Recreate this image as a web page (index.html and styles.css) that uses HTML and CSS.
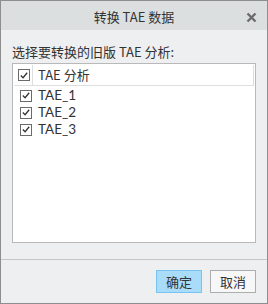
FILE: index.html
```html
<!DOCTYPE html>
<html lang="zh">
<head>
<meta charset="utf-8">
<link rel="stylesheet" href="styles.css">
</head>
<body>
<div class="dialog">
  <div class="titlebar">
    <span class="title">转换 TAE 数据</span>
    <span class="close">
      <svg width="11" height="11" viewBox="0 0 11 11"><path d="M1.5 1.5 L9.5 9.5 M9.5 1.5 L1.5 9.5" stroke="#6b6b6b" stroke-width="2.4" fill="none"/></svg>
    </span>
  </div>
  <div class="content">
    <div class="label">选择要转换的旧版 TAE 分析:</div>
    <div class="list">
      <div class="header">
        <span class="hcheck"><span class="cb"><svg width="11" height="11" viewBox="0 0 11 11"><path d="M2 5.5 L4.5 8 L9 2.5" stroke="#333" stroke-width="1.4" fill="none"/></svg></span></span>
        <span class="htext">TAE 分析</span>
      </div>
      <div class="row"><span class="cb"><svg width="11" height="11" viewBox="0 0 11 11"><path d="M2 5.5 L4.5 8 L9 2.5" stroke="#333" stroke-width="1.4" fill="none"/></svg></span><span class="rtext">TAE_1</span></div>
      <div class="row"><span class="cb"><svg width="11" height="11" viewBox="0 0 11 11"><path d="M2 5.5 L4.5 8 L9 2.5" stroke="#333" stroke-width="1.4" fill="none"/></svg></span><span class="rtext">TAE_2</span></div>
      <div class="row"><span class="cb"><svg width="11" height="11" viewBox="0 0 11 11"><path d="M2 5.5 L4.5 8 L9 2.5" stroke="#333" stroke-width="1.4" fill="none"/></svg></span><span class="rtext">TAE_3</span></div>
    </div>
  </div>
  <div class="sep"></div>
  <div class="footer">
    <button class="btn primary">确定</button>
    <button class="btn">取消</button>
  </div>
</div>
</body>
</html>
```
FILE: styles.css
```css
html, body {
  margin: 0;
  padding: 0;
}
body {
  width: 268px;
  height: 304px;
  font-family: "Noto Sans CJK SC", "Noto Sans", sans-serif;
  font-size: 13px;
  color: #333;
}
.dialog {
  box-sizing: border-box;
  width: 268px;
  height: 304px;
  border: 1px solid #8e8e8e;
  background: #eeeff0;
  display: flex;
  flex-direction: column;
}
.titlebar {
  height: 29px;
  background: #dcdfe0;
  position: relative;
  display: flex;
  align-items: center;
  justify-content: center;
}
.title {
  font-size: 13px;
  color: #333;
  line-height: 17px;
  margin-top: 1px;
}
.close {
  position: absolute;
  right: 10px;
  top: 11px;
  width: 11px;
  height: 11px;
  display: flex;
}
.content {
  padding: 13px 11px 0 11px;
}
.label {
  line-height: 17px;
  height: 17px;
  color: #333;
}
.list {
  margin-top: 3px;
  height: 176px;
  background: #fff;
  border: 1px solid #b9b9b9;
  padding: 1px;
  box-sizing: content-box;
}
.header {
  display: flex;
  align-items: center;
  height: 20px;
  border-right: 1px solid #dedede;
  border-bottom: 1px solid #dedede;
}
.hcheck {
  width: 14px;
  padding-left: 4px;
  height: 20px;
  display: flex;
  align-items: center;
  border-right: 1px solid #dedede;
}
.htext {
  padding-left: 5px;
  line-height: 16px;
}
.cb {
  box-sizing: border-box;
  width: 12px;
  height: 12px;
  border: 1px solid #6a6a6a;
  background: #fff;
  display: flex;
  align-items: center;
  justify-content: center;
}
.cb svg {
  display: block;
}
.row {
  display: flex;
  align-items: center;
  height: 17px;
  padding-left: 6px;
  gap: 6px;
}
.rtext {
  font-family: Lato, "Noto Sans CJK SC", sans-serif;
  font-size: 13.5px;
  line-height: 15px;
  height: 15px;
}
.header + .row {
  margin-top: 1px;
}
.sep {
  margin-top: 16px;
  height: 1px;
  background: #c6c6c6;
}
.footer {
  display: flex;
  justify-content: flex-end;
  gap: 8px;
  padding: 10px 11px 0 0;
}
.btn {
  box-sizing: border-box;
  width: 46px;
  height: 23px;
  margin: 0;
  padding: 0;
  font-family: "Noto Sans CJK SC", "Noto Sans", sans-serif;
  font-size: 13px;
  color: #333;
  background: #f7f7f7;
  border: 1px solid #adadad;
  border-radius: 0;
}
.btn.primary {
  background: #a8dcf8;
  border-color: #78c3f0;
}
```
